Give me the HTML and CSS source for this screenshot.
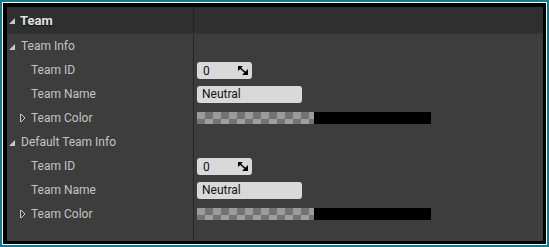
FILE: index.html
```html
<!DOCTYPE html>
<html lang="en">
<head>
    <meta charset="UTF-8">
    <title>Team Details</title>
    <link rel="stylesheet" href="styles.css">
</head>
<body>
    <div class="frame">
        <div class="panel">
            <div class="category">
                <div class="cat-name"><span class="tri-open"></span>Team</div>
                <div class="cat-value"></div>
            </div>
            <div class="tree">
                <div class="row">
                    <div class="name lvl1"><span class="tri-open small"></span>Team Info</div>
                    <div class="value"></div>
                </div>
                <div class="row">
                    <div class="name lvl2">Team ID</div>
                    <div class="value">
                        <div class="num-box"><span>0</span>
                            <svg class="spin" width="10" height="9" viewBox="0 0 10 9"><path d="M0 0H5L0 5Z M10 3V9H4Z" fill="#000"/><path d="M1 1L9 8" stroke="#000" stroke-width="1.6"/></svg>
                        </div>
                    </div>
                </div>
                <div class="row">
                    <div class="name lvl2">Team Name</div>
                    <div class="value"><div class="text-box">Neutral</div></div>
                </div>
                <div class="row">
                    <div class="name lvl2 has-arrow"><span class="tri-closed"></span>Team Color</div>
                    <div class="value"><div class="swatch"><div class="checker"></div><div class="solid"></div></div></div>
                </div>
                <div class="row">
                    <div class="name lvl1"><span class="tri-open small"></span>Default Team Info</div>
                    <div class="value"></div>
                </div>
                <div class="row">
                    <div class="name lvl2">Team ID</div>
                    <div class="value">
                        <div class="num-box"><span>0</span>
                            <svg class="spin" width="10" height="9" viewBox="0 0 10 9"><path d="M0 0H5L0 5Z M10 3V9H4Z" fill="#000"/><path d="M1 1L9 8" stroke="#000" stroke-width="1.6"/></svg>
                        </div>
                    </div>
                </div>
                <div class="row">
                    <div class="name lvl2">Team Name</div>
                    <div class="value"><div class="text-box">Neutral</div></div>
                </div>
                <div class="row">
                    <div class="name lvl2 has-arrow"><span class="tri-closed"></span>Team Color</div>
                    <div class="value"><div class="swatch"><div class="checker"></div><div class="solid"></div></div></div>
                </div>
                <div class="row filler">
                    <div class="name"></div>
                    <div class="value"></div>
                </div>
            </div>
        </div>
    </div>
</body>
</html>
```

FILE: styles.css
```css
* {
    box-sizing: border-box;
}
body {
    margin: 0;
    padding: 2px;
    background-color: #137b8c;
    font-family: Roboto, "Liberation Sans", sans-serif;
    height: 247px;
}
.frame {
    border: 1px solid #fff;
    background-color: #000;
    padding: 4px 3px 3px 4px;
    height: 100%;
}
.panel {
    background-color: #3d3d3d;
    height: 100%;
    display: flex;
    flex-direction: column;
}
.category {
    display: flex;
    height: 27px;
    background-color: #2f2f2f;
    border-bottom: 1px solid #353535;
}
.cat-name {
    width: 186px;
    display: flex;
    align-items: center;
    padding-left: 2px;
    font-size: 13px;
    font-weight: bold;
    color: #e4e4e4;
    text-shadow: 0 1px 1px #111;
}
.cat-value {
    flex: 1;
    border-left: 1px solid #222;
}
.tri-open {
    width: 0;
    height: 0;
    border-left: 6px solid transparent;
    border-bottom: 6px solid #c8c8c8;
    margin-right: 5px;
    margin-top: 2px;
}
.tri-open.small {
    margin-right: 6px;
}
.tri-closed {
    width: 5px;
    height: 8px;
    margin-right: 6px;
    background: linear-gradient(to bottom right, transparent 45%, #c8c8c8 45%, #c8c8c8 60%, transparent 60%) bottom/100% 50% no-repeat,
                linear-gradient(to top right, transparent 45%, #c8c8c8 45%, #c8c8c8 60%, transparent 60%) top/100% 50% no-repeat;
    border-left: 1px solid #c8c8c8;
}
.tree {
    flex: 1;
    display: flex;
    flex-direction: column;
    margin-right: 4px;
    border-right: 1px solid #434343;
}
.row {
    display: flex;
    height: 24px;
}
.row.filler {
    flex: 1;
}
.name {
    width: 186px;
    display: flex;
    align-items: center;
    font-size: 12px;
    color: #c4c4c4;
}
.lvl1 {
    padding-left: 2px;
}
.lvl2 {
    padding-left: 24px;
}
.lvl2.has-arrow {
    padding-left: 13px;
}
.value {
    flex: 1;
    border-left: 1px solid #262626;
    display: flex;
    align-items: center;
    padding-left: 3px;
}
.num-box {
    width: 55px;
    height: 17px;
    background-color: #d9d9d9;
    border-radius: 3px;
    display: flex;
    align-items: center;
    justify-content: space-between;
    padding: 0 4px 0 6px;
    font-size: 12px;
    color: #111;
    margin-top: 1px;
}
.text-box {
    width: 105px;
    height: 17px;
    background-color: #d9d9d9;
    border-radius: 3px;
    font-size: 12px;
    color: #111;
    padding-left: 5px;
    line-height: 17px;
}
.swatch {
    display: flex;
    height: 12px;
    width: 234px;
}
.checker {
    width: 117px;
    background:
        repeating-linear-gradient(to right, #9b9b9b 0 8px, #727272 8px 16px) top/100% 7px no-repeat,
        repeating-linear-gradient(to right, #747474 0 8px, #9d9d9d 8px 16px) bottom/100% 5px no-repeat;
}
.solid {
    flex: 1;
    background-color: #000;
}
```
